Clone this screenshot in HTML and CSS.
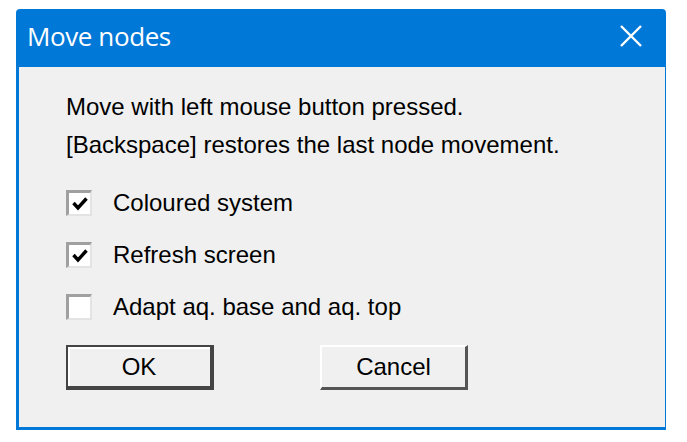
FILE: index.html
```html
<!DOCTYPE html>
<html>
<head>
<meta charset="utf-8">
<link rel="stylesheet" href="styles.css">
</head>
<body>
<div class="dialog">
  <div class="titlebar">
    <span class="title">Move nodes</span>
    <svg class="close" width="24" height="24" viewBox="0 0 24 24"><path d="M2 2 L22 22 M22 2 L2 22" stroke="#fff" stroke-width="2.4" fill="none"/></svg>
  </div>
  <div class="client">
    <div class="msg">
      <div class="line">Move with left mouse button pressed.</div>
      <div class="line">[Backspace] restores the last node movement.</div>
    </div>
    <div class="checks">
      <div class="check">
        <span class="box"><svg width="18" height="18" viewBox="0 0 18 18"><path d="M2.5 8 L7 13 L15.5 3.5" stroke="#000" stroke-width="3.4" fill="none"/></svg></span>
        <span class="label">Coloured system</span>
      </div>
      <div class="check">
        <span class="box"><svg width="18" height="18" viewBox="0 0 18 18"><path d="M2.5 8 L7 13 L15.5 3.5" stroke="#000" stroke-width="3.4" fill="none"/></svg></span>
        <span class="label">Refresh screen</span>
      </div>
      <div class="check">
        <span class="box"></span>
        <span class="label">Adapt aq. base and aq. top</span>
      </div>
    </div>
    <div class="buttons">
      <div class="btn default">OK</div>
      <div class="btn">Cancel</div>
    </div>
  </div>
</div>
</body>
</html>
```
FILE: styles.css
```css
html, body {
  margin: 0;
  padding: 0;
  background: #ffffff;
}
.dialog {
  margin: 9px 0 0 16px;
  width: 650px;
  height: 421px;
  box-sizing: border-box;
  background: #0078d7;
  border-radius: 4px 4px 0 0;
  padding: 0 1px 3px 3px;
  display: flex;
  flex-direction: column;
}
.titlebar {
  height: 58px;
  box-sizing: border-box;
  flex: none;
  display: flex;
  align-items: center;
  justify-content: space-between;
  padding: 0 22px 4px 8px;
  color: #fff;
  font-family: "Open Sans", "Noto Sans", sans-serif;
  font-size: 26px;
}
.title {
  letter-spacing: -0.4px;
}
.client {
  flex: 1;
  background: #f0f0f0;
  padding: 21px 0 0 47px;
  font-family: "Liberation Sans", Arial, sans-serif;
  font-size: 24px;
  color: #000;
  display: flex;
  flex-direction: column;
}
.msg .line {
  line-height: 38px;
}
.checks {
  margin-top: 25px;
  display: flex;
  flex-direction: column;
  gap: 24px;
}
.check {
  display: flex;
  align-items: center;
  gap: 21px;
  height: 28px;
}
.box {
  width: 26px;
  height: 26px;
  box-sizing: border-box;
  background: #fff;
  border-top: 3px solid #a0a0a0;
  border-left: 3px solid #a0a0a0;
  border-right: 2px solid #e3e3e3;
  border-bottom: 2px solid #e3e3e3;
  display: flex;
  align-items: center;
  justify-content: center;
}
.buttons {
  margin-top: 24px;
  display: flex;
  gap: 106px;
}
.btn {
  width: 148px;
  height: 45px;
  box-sizing: border-box;
  display: flex;
  align-items: center;
  justify-content: center;
  background: #f0f0f0;
  border-top: 2px solid #ffffff;
  border-left: 2px solid #ffffff;
  border-right: 3px solid #555;
  border-bottom: 3px solid #555;
}
.btn.default {
  border: 2px solid #444;
  border-right-width: 4px;
  border-bottom-width: 4px;
  box-shadow: inset 2px 2px 0 #fff;
}
```
